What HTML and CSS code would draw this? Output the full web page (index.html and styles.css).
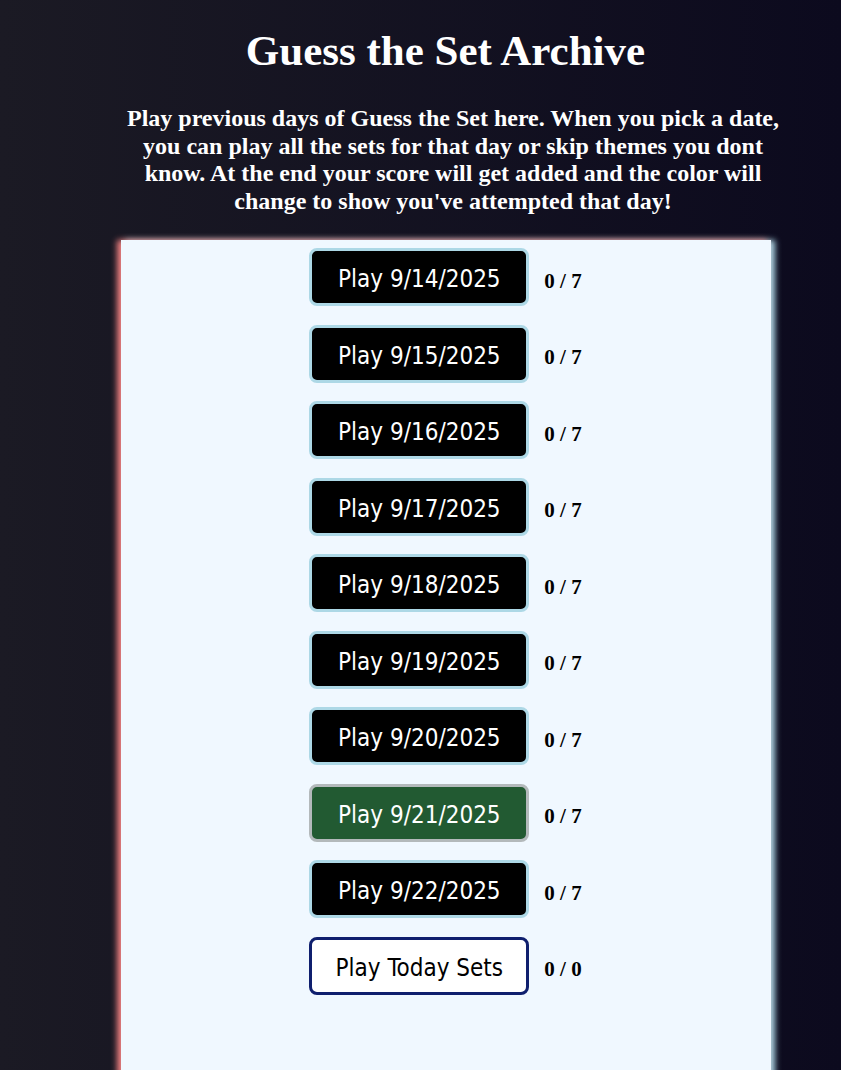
FILE: index.html
```html
<!DOCTYPE html>
<html>
<head>
<meta charset="utf-8">
<title>Guess the Set Archive</title>
<link rel="stylesheet" href="styles.css">
</head>
<body>
<div class="page">
  <h1 class="title">Guess the Set Archive</h1>
  <p class="intro">Play previous days of Guess the Set here. When you pick a date, you can play all the sets for that day or skip themes you dont know. At the end your score will get added and the color will change to show you've attempted that day!</p>
  <div class="panel">
    <div class="row"><button class="play">Play 9/14/2025</button><span class="score">0 / 7</span></div>
    <div class="row"><button class="play">Play 9/15/2025</button><span class="score">0 / 7</span></div>
    <div class="row"><button class="play">Play 9/16/2025</button><span class="score">0 / 7</span></div>
    <div class="row"><button class="play">Play 9/17/2025</button><span class="score">0 / 7</span></div>
    <div class="row"><button class="play">Play 9/18/2025</button><span class="score">0 / 7</span></div>
    <div class="row"><button class="play">Play 9/19/2025</button><span class="score">0 / 7</span></div>
    <div class="row"><button class="play">Play 9/20/2025</button><span class="score">0 / 7</span></div>
    <div class="row"><button class="play play-done">Play 9/21/2025</button><span class="score">0 / 7</span></div>
    <div class="row"><button class="play">Play 9/22/2025</button><span class="score">0 / 7</span></div>
    <div class="row"><button class="play play-today">Play Today Sets</button><span class="score">0 / 0</span></div>
  </div>
</div>
</body>
</html>
```
FILE: styles.css
```css
html, body {
  margin: 0;
  padding: 0;
}
body {
  background: linear-gradient(to right, #1b1a24, #0c0a1e);
  min-height: 1070px;
  font-family: "Liberation Serif", "Times New Roman", serif;
  color: #fff;
  padding-left: 50px;
  overflow: hidden;
}
.page {
  display: flex;
  flex-direction: column;
  align-items: center;
}
.title {
  margin: 27px 0 0;
  font-size: 43px;
  line-height: 48px;
  font-weight: bold;
  text-align: center;
}
.intro {
  width: 680px;
  margin: 30px 0 0;
  padding-left: 15px;
  font-size: 24px;
  line-height: 27.6px;
  font-weight: bold;
  text-align: center;
}
.panel {
  width: 650px;
  margin-top: 25px;
  min-height: 840px;
  background: #f0f8ff;
  box-shadow: -4px 0 6px #f08080, 4px 0 6px #add8e6;
  display: flex;
  flex-direction: column;
  align-items: center;
  gap: 18.5px;
  padding-top: 8px;
  box-sizing: border-box;
}
.row {
  display: flex;
  align-items: center;
  gap: 15px;
}
.play {
  width: 220px;
  height: 58px;
  box-sizing: border-box;
  border: 3px solid #add8e6;
  border-radius: 8px;
  background: #000;
  color: #fff;
  font-family: "DejaVu Sans Condensed", "DejaVu Sans", sans-serif;
  font-size: 24px;
  padding: 4px 0 0;
  cursor: pointer;
}
.play-done {
  background: #225a32;
  border-color: #b3b9bb;
}
.play-today {
  background: #fff;
  color: #000;
  border-color: #0f1f6e;
}
.score {
  color: #000;
  font-size: 21px;
  font-weight: bold;
  padding-top: 8px;
}
```
